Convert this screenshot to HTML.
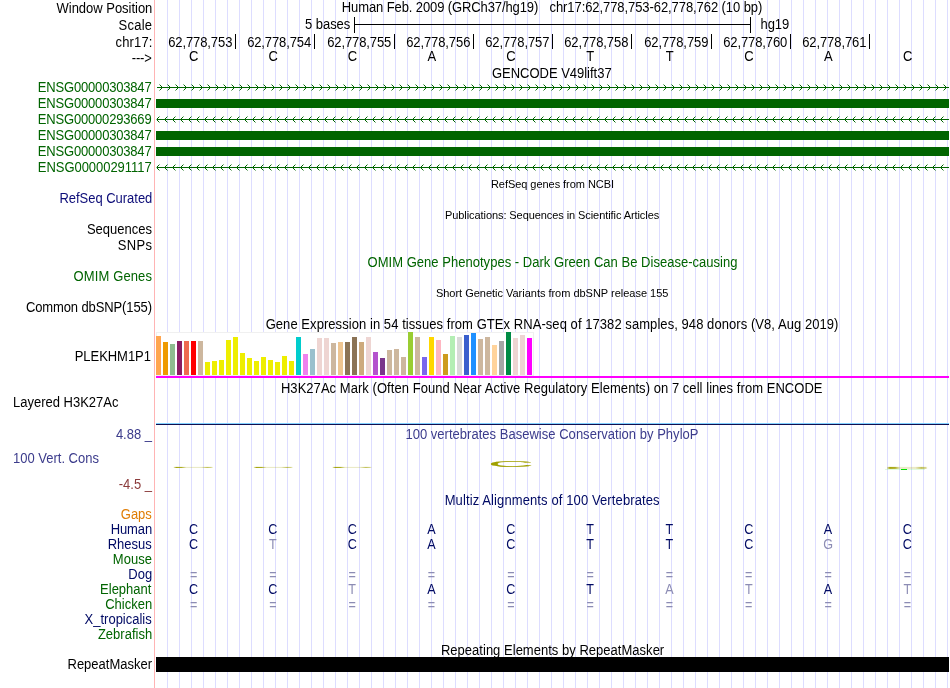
<!DOCTYPE html>
<html><head><meta charset="utf-8"><style>
html,body{margin:0;padding:0;background:#fff;overflow:hidden}
svg{display:block;will-change:transform}
text{font-family:"Liberation Sans",sans-serif}
</style></head><body>
<svg width="950" height="688" viewBox="0 0 950 688" shape-rendering="crispEdges">
<path d="M167.5 0V688 M179.5 0V688 M191.5 0V688 M203.5 0V688 M215.5 0V688 M227.5 0V688 M239.5 0V688 M251.5 0V688 M263.5 0V688 M275.5 0V688 M287.5 0V688 M299.5 0V688 M311.5 0V688 M323.5 0V688 M335.5 0V688 M347.5 0V688 M359.5 0V688 M371.5 0V688 M383.5 0V688 M395.5 0V688 M407.5 0V688 M419.5 0V688 M431.5 0V688 M443.5 0V688 M455.5 0V688 M467.5 0V688 M479.5 0V688 M491.5 0V688 M503.5 0V688 M515.5 0V688 M527.5 0V688 M539.5 0V688 M551.5 0V688 M563.5 0V688 M575.5 0V688 M587.5 0V688 M599.5 0V688 M611.5 0V688 M623.5 0V688 M635.5 0V688 M647.5 0V688 M659.5 0V688 M671.5 0V688 M683.5 0V688 M695.5 0V688 M707.5 0V688 M719.5 0V688 M731.5 0V688 M743.5 0V688 M755.5 0V688 M767.5 0V688 M779.5 0V688 M791.5 0V688 M803.5 0V688 M815.5 0V688 M827.5 0V688 M839.5 0V688 M851.5 0V688 M863.5 0V688 M875.5 0V688 M887.5 0V688 M899.5 0V688 M911.5 0V688 M923.5 0V688 M935.5 0V688 M947.5 0V688" stroke="#ddddff" stroke-width="1"/>
<path d="M154.5 0V688" stroke="#ffb4b4" stroke-width="1"/>
<text x="56.54" y="0" transform="translate(0 12.5) scale(1 1.07)" font-size="13" fill="#000" textLength="95.80" lengthAdjust="spacing" >Window Position</text>
<text x="118.61" y="0" transform="translate(0 29.5) scale(1 1.07)" font-size="13" fill="#000" textLength="33.47" lengthAdjust="spacing" >Scale</text>
<text x="115.55" y="0" transform="translate(0 47) scale(1 1.07)" font-size="13" fill="#000" textLength="36.84" lengthAdjust="spacing" >chr17:</text>
<text x="131.72" y="0" transform="translate(0 62.5) scale(1 1.07)" font-size="13" fill="#000" textLength="20.11" lengthAdjust="spacing" >---&gt;</text>
<text x="341.83" y="0" transform="translate(0 11.6) scale(1 1.07)" font-size="13" fill="#000" textLength="196.47" lengthAdjust="spacing" >Human Feb. 2009 (GRCh37/hg19)</text>
<text x="549.55" y="0" transform="translate(0 11.6) scale(1 1.07)" font-size="13" fill="#000" textLength="212.76" lengthAdjust="spacing" >chr17:62,778,753-62,778,762 (10 bp)</text>
<text x="305.08" y="0" transform="translate(0 29) scale(1 1.07)" font-size="13" fill="#000" textLength="45.19" lengthAdjust="spacing" >5 bases</text>
<path d="M354.5 17V33 M750.5 17V33 M354 24.5H751" stroke="#000" stroke-width="1"/>
<text x="760.60" y="0" transform="translate(0 29) scale(1 1.07)" font-size="13" fill="#000" textLength="28.52" lengthAdjust="spacing" >hg19</text>
<path d="M235.5 34V49" stroke="#000" stroke-width="1"/>
<text x="168.14" y="0" transform="translate(0 47) scale(1 1.07)" font-size="13" fill="#000" textLength="64.23" lengthAdjust="spacing" >62,778,753</text>
<path d="M314.5 34V49" stroke="#000" stroke-width="1"/>
<text x="247.14" y="0" transform="translate(0 47) scale(1 1.07)" font-size="13" fill="#000" textLength="64.04" lengthAdjust="spacing" >62,778,754</text>
<path d="M394.5 34V49" stroke="#000" stroke-width="1"/>
<text x="327.14" y="0" transform="translate(0 47) scale(1 1.07)" font-size="13" fill="#000" textLength="64.21" lengthAdjust="spacing" >62,778,755</text>
<path d="M473.5 34V49" stroke="#000" stroke-width="1"/>
<text x="406.14" y="0" transform="translate(0 47) scale(1 1.07)" font-size="13" fill="#000" textLength="64.23" lengthAdjust="spacing" >62,778,756</text>
<path d="M552.5 34V49" stroke="#000" stroke-width="1"/>
<text x="485.14" y="0" transform="translate(0 47) scale(1 1.07)" font-size="13" fill="#000" textLength="64.31" lengthAdjust="spacing" >62,778,757</text>
<path d="M631.5 34V49" stroke="#000" stroke-width="1"/>
<text x="564.14" y="0" transform="translate(0 47) scale(1 1.07)" font-size="13" fill="#000" textLength="64.23" lengthAdjust="spacing" >62,778,758</text>
<path d="M711.5 34V49" stroke="#000" stroke-width="1"/>
<text x="644.14" y="0" transform="translate(0 47) scale(1 1.07)" font-size="13" fill="#000" textLength="64.28" lengthAdjust="spacing" >62,778,759</text>
<path d="M790.5 34V49" stroke="#000" stroke-width="1"/>
<text x="723.14" y="0" transform="translate(0 47) scale(1 1.07)" font-size="13" fill="#000" textLength="64.17" lengthAdjust="spacing" >62,778,760</text>
<path d="M869.5 34V49" stroke="#000" stroke-width="1"/>
<text x="802.14" y="0" transform="translate(0 47) scale(1 1.07)" font-size="13" fill="#000" textLength="64.29" lengthAdjust="spacing" >62,778,761</text>
<text x="193.80" y="0" font-size="13" text-anchor="middle" transform="translate(0 60.8) scale(1 1.12)">C</text>
<text x="273.11" y="0" font-size="13" text-anchor="middle" transform="translate(0 60.8) scale(1 1.12)">C</text>
<text x="352.42" y="0" font-size="13" text-anchor="middle" transform="translate(0 60.8) scale(1 1.12)">C</text>
<text x="431.73" y="0" font-size="13" text-anchor="middle" transform="translate(0 60.8) scale(1 1.12)">A</text>
<text x="511.04" y="0" font-size="13" text-anchor="middle" transform="translate(0 60.8) scale(1 1.12)">C</text>
<text x="590.35" y="0" font-size="13" text-anchor="middle" transform="translate(0 60.8) scale(1 1.12)">T</text>
<text x="669.66" y="0" font-size="13" text-anchor="middle" transform="translate(0 60.8) scale(1 1.12)">T</text>
<text x="748.97" y="0" font-size="13" text-anchor="middle" transform="translate(0 60.8) scale(1 1.12)">C</text>
<text x="828.28" y="0" font-size="13" text-anchor="middle" transform="translate(0 60.8) scale(1 1.12)">A</text>
<text x="907.59" y="0" font-size="13" text-anchor="middle" transform="translate(0 60.8) scale(1 1.12)">C</text>
<text x="491.95" y="0" transform="translate(0 78) scale(1 1.07)" font-size="13" fill="#000" textLength="119.71" lengthAdjust="spacing" >GENCODE V49lift37</text>
<text x="37.83" y="0" transform="translate(0 91.8) scale(1 1.07)" font-size="13" fill="#006400" textLength="113.82" lengthAdjust="spacing" >ENSG00000303847</text>
<text x="37.83" y="0" transform="translate(0 107.8) scale(1 1.07)" font-size="13" fill="#006400" textLength="113.82" lengthAdjust="spacing" >ENSG00000303847</text>
<text x="37.83" y="0" transform="translate(0 123.8) scale(1 1.07)" font-size="13" fill="#006400" textLength="113.78" lengthAdjust="spacing" >ENSG00000293669</text>
<text x="37.83" y="0" transform="translate(0 139.8) scale(1 1.07)" font-size="13" fill="#006400" textLength="113.82" lengthAdjust="spacing" >ENSG00000303847</text>
<text x="37.83" y="0" transform="translate(0 155.8) scale(1 1.07)" font-size="13" fill="#006400" textLength="113.82" lengthAdjust="spacing" >ENSG00000303847</text>
<text x="37.83" y="0" transform="translate(0 171.8) scale(1 1.07)" font-size="13" fill="#006400" textLength="113.82" lengthAdjust="spacing" >ENSG00000291117</text>
<path d="M157 87h792v1h-792zM161 86h1v1h-1zM161 87h1v1h-1zM161 88h1v1h-1zM160 85h1v1h-1zM160 89h1v1h-1zM169 86h1v1h-1zM169 87h1v1h-1zM169 88h1v1h-1zM168 85h1v1h-1zM168 89h1v1h-1zM177 86h1v1h-1zM177 87h1v1h-1zM177 88h1v1h-1zM176 85h1v1h-1zM176 89h1v1h-1zM185 86h1v1h-1zM185 87h1v1h-1zM185 88h1v1h-1zM184 85h1v1h-1zM184 89h1v1h-1zM193 86h1v1h-1zM193 87h1v1h-1zM193 88h1v1h-1zM192 85h1v1h-1zM192 89h1v1h-1zM201 86h1v1h-1zM201 87h1v1h-1zM201 88h1v1h-1zM200 85h1v1h-1zM200 89h1v1h-1zM209 86h1v1h-1zM209 87h1v1h-1zM209 88h1v1h-1zM208 85h1v1h-1zM208 89h1v1h-1zM217 86h1v1h-1zM217 87h1v1h-1zM217 88h1v1h-1zM216 85h1v1h-1zM216 89h1v1h-1zM225 86h1v1h-1zM225 87h1v1h-1zM225 88h1v1h-1zM224 85h1v1h-1zM224 89h1v1h-1zM233 86h1v1h-1zM233 87h1v1h-1zM233 88h1v1h-1zM232 85h1v1h-1zM232 89h1v1h-1zM241 86h1v1h-1zM241 87h1v1h-1zM241 88h1v1h-1zM240 85h1v1h-1zM240 89h1v1h-1zM249 86h1v1h-1zM249 87h1v1h-1zM249 88h1v1h-1zM248 85h1v1h-1zM248 89h1v1h-1zM257 86h1v1h-1zM257 87h1v1h-1zM257 88h1v1h-1zM256 85h1v1h-1zM256 89h1v1h-1zM265 86h1v1h-1zM265 87h1v1h-1zM265 88h1v1h-1zM264 85h1v1h-1zM264 89h1v1h-1zM273 86h1v1h-1zM273 87h1v1h-1zM273 88h1v1h-1zM272 85h1v1h-1zM272 89h1v1h-1zM281 86h1v1h-1zM281 87h1v1h-1zM281 88h1v1h-1zM280 85h1v1h-1zM280 89h1v1h-1zM289 86h1v1h-1zM289 87h1v1h-1zM289 88h1v1h-1zM288 85h1v1h-1zM288 89h1v1h-1zM297 86h1v1h-1zM297 87h1v1h-1zM297 88h1v1h-1zM296 85h1v1h-1zM296 89h1v1h-1zM305 86h1v1h-1zM305 87h1v1h-1zM305 88h1v1h-1zM304 85h1v1h-1zM304 89h1v1h-1zM313 86h1v1h-1zM313 87h1v1h-1zM313 88h1v1h-1zM312 85h1v1h-1zM312 89h1v1h-1zM321 86h1v1h-1zM321 87h1v1h-1zM321 88h1v1h-1zM320 85h1v1h-1zM320 89h1v1h-1zM329 86h1v1h-1zM329 87h1v1h-1zM329 88h1v1h-1zM328 85h1v1h-1zM328 89h1v1h-1zM337 86h1v1h-1zM337 87h1v1h-1zM337 88h1v1h-1zM336 85h1v1h-1zM336 89h1v1h-1zM345 86h1v1h-1zM345 87h1v1h-1zM345 88h1v1h-1zM344 85h1v1h-1zM344 89h1v1h-1zM353 86h1v1h-1zM353 87h1v1h-1zM353 88h1v1h-1zM352 85h1v1h-1zM352 89h1v1h-1zM361 86h1v1h-1zM361 87h1v1h-1zM361 88h1v1h-1zM360 85h1v1h-1zM360 89h1v1h-1zM369 86h1v1h-1zM369 87h1v1h-1zM369 88h1v1h-1zM368 85h1v1h-1zM368 89h1v1h-1zM377 86h1v1h-1zM377 87h1v1h-1zM377 88h1v1h-1zM376 85h1v1h-1zM376 89h1v1h-1zM385 86h1v1h-1zM385 87h1v1h-1zM385 88h1v1h-1zM384 85h1v1h-1zM384 89h1v1h-1zM393 86h1v1h-1zM393 87h1v1h-1zM393 88h1v1h-1zM392 85h1v1h-1zM392 89h1v1h-1zM401 86h1v1h-1zM401 87h1v1h-1zM401 88h1v1h-1zM400 85h1v1h-1zM400 89h1v1h-1zM409 86h1v1h-1zM409 87h1v1h-1zM409 88h1v1h-1zM408 85h1v1h-1zM408 89h1v1h-1zM417 86h1v1h-1zM417 87h1v1h-1zM417 88h1v1h-1zM416 85h1v1h-1zM416 89h1v1h-1zM425 86h1v1h-1zM425 87h1v1h-1zM425 88h1v1h-1zM424 85h1v1h-1zM424 89h1v1h-1zM433 86h1v1h-1zM433 87h1v1h-1zM433 88h1v1h-1zM432 85h1v1h-1zM432 89h1v1h-1zM441 86h1v1h-1zM441 87h1v1h-1zM441 88h1v1h-1zM440 85h1v1h-1zM440 89h1v1h-1zM449 86h1v1h-1zM449 87h1v1h-1zM449 88h1v1h-1zM448 85h1v1h-1zM448 89h1v1h-1zM457 86h1v1h-1zM457 87h1v1h-1zM457 88h1v1h-1zM456 85h1v1h-1zM456 89h1v1h-1zM465 86h1v1h-1zM465 87h1v1h-1zM465 88h1v1h-1zM464 85h1v1h-1zM464 89h1v1h-1zM473 86h1v1h-1zM473 87h1v1h-1zM473 88h1v1h-1zM472 85h1v1h-1zM472 89h1v1h-1zM481 86h1v1h-1zM481 87h1v1h-1zM481 88h1v1h-1zM480 85h1v1h-1zM480 89h1v1h-1zM489 86h1v1h-1zM489 87h1v1h-1zM489 88h1v1h-1zM488 85h1v1h-1zM488 89h1v1h-1zM497 86h1v1h-1zM497 87h1v1h-1zM497 88h1v1h-1zM496 85h1v1h-1zM496 89h1v1h-1zM505 86h1v1h-1zM505 87h1v1h-1zM505 88h1v1h-1zM504 85h1v1h-1zM504 89h1v1h-1zM513 86h1v1h-1zM513 87h1v1h-1zM513 88h1v1h-1zM512 85h1v1h-1zM512 89h1v1h-1zM521 86h1v1h-1zM521 87h1v1h-1zM521 88h1v1h-1zM520 85h1v1h-1zM520 89h1v1h-1zM529 86h1v1h-1zM529 87h1v1h-1zM529 88h1v1h-1zM528 85h1v1h-1zM528 89h1v1h-1zM537 86h1v1h-1zM537 87h1v1h-1zM537 88h1v1h-1zM536 85h1v1h-1zM536 89h1v1h-1zM545 86h1v1h-1zM545 87h1v1h-1zM545 88h1v1h-1zM544 85h1v1h-1zM544 89h1v1h-1zM553 86h1v1h-1zM553 87h1v1h-1zM553 88h1v1h-1zM552 85h1v1h-1zM552 89h1v1h-1zM561 86h1v1h-1zM561 87h1v1h-1zM561 88h1v1h-1zM560 85h1v1h-1zM560 89h1v1h-1zM569 86h1v1h-1zM569 87h1v1h-1zM569 88h1v1h-1zM568 85h1v1h-1zM568 89h1v1h-1zM577 86h1v1h-1zM577 87h1v1h-1zM577 88h1v1h-1zM576 85h1v1h-1zM576 89h1v1h-1zM585 86h1v1h-1zM585 87h1v1h-1zM585 88h1v1h-1zM584 85h1v1h-1zM584 89h1v1h-1zM593 86h1v1h-1zM593 87h1v1h-1zM593 88h1v1h-1zM592 85h1v1h-1zM592 89h1v1h-1zM601 86h1v1h-1zM601 87h1v1h-1zM601 88h1v1h-1zM600 85h1v1h-1zM600 89h1v1h-1zM609 86h1v1h-1zM609 87h1v1h-1zM609 88h1v1h-1zM608 85h1v1h-1zM608 89h1v1h-1zM617 86h1v1h-1zM617 87h1v1h-1zM617 88h1v1h-1zM616 85h1v1h-1zM616 89h1v1h-1zM625 86h1v1h-1zM625 87h1v1h-1zM625 88h1v1h-1zM624 85h1v1h-1zM624 89h1v1h-1zM633 86h1v1h-1zM633 87h1v1h-1zM633 88h1v1h-1zM632 85h1v1h-1zM632 89h1v1h-1zM641 86h1v1h-1zM641 87h1v1h-1zM641 88h1v1h-1zM640 85h1v1h-1zM640 89h1v1h-1zM649 86h1v1h-1zM649 87h1v1h-1zM649 88h1v1h-1zM648 85h1v1h-1zM648 89h1v1h-1zM657 86h1v1h-1zM657 87h1v1h-1zM657 88h1v1h-1zM656 85h1v1h-1zM656 89h1v1h-1zM665 86h1v1h-1zM665 87h1v1h-1zM665 88h1v1h-1zM664 85h1v1h-1zM664 89h1v1h-1zM673 86h1v1h-1zM673 87h1v1h-1zM673 88h1v1h-1zM672 85h1v1h-1zM672 89h1v1h-1zM681 86h1v1h-1zM681 87h1v1h-1zM681 88h1v1h-1zM680 85h1v1h-1zM680 89h1v1h-1zM689 86h1v1h-1zM689 87h1v1h-1zM689 88h1v1h-1zM688 85h1v1h-1zM688 89h1v1h-1zM697 86h1v1h-1zM697 87h1v1h-1zM697 88h1v1h-1zM696 85h1v1h-1zM696 89h1v1h-1zM705 86h1v1h-1zM705 87h1v1h-1zM705 88h1v1h-1zM704 85h1v1h-1zM704 89h1v1h-1zM713 86h1v1h-1zM713 87h1v1h-1zM713 88h1v1h-1zM712 85h1v1h-1zM712 89h1v1h-1zM721 86h1v1h-1zM721 87h1v1h-1zM721 88h1v1h-1zM720 85h1v1h-1zM720 89h1v1h-1zM729 86h1v1h-1zM729 87h1v1h-1zM729 88h1v1h-1zM728 85h1v1h-1zM728 89h1v1h-1zM737 86h1v1h-1zM737 87h1v1h-1zM737 88h1v1h-1zM736 85h1v1h-1zM736 89h1v1h-1zM745 86h1v1h-1zM745 87h1v1h-1zM745 88h1v1h-1zM744 85h1v1h-1zM744 89h1v1h-1zM753 86h1v1h-1zM753 87h1v1h-1zM753 88h1v1h-1zM752 85h1v1h-1zM752 89h1v1h-1zM761 86h1v1h-1zM761 87h1v1h-1zM761 88h1v1h-1zM760 85h1v1h-1zM760 89h1v1h-1zM769 86h1v1h-1zM769 87h1v1h-1zM769 88h1v1h-1zM768 85h1v1h-1zM768 89h1v1h-1zM777 86h1v1h-1zM777 87h1v1h-1zM777 88h1v1h-1zM776 85h1v1h-1zM776 89h1v1h-1zM785 86h1v1h-1zM785 87h1v1h-1zM785 88h1v1h-1zM784 85h1v1h-1zM784 89h1v1h-1zM793 86h1v1h-1zM793 87h1v1h-1zM793 88h1v1h-1zM792 85h1v1h-1zM792 89h1v1h-1zM801 86h1v1h-1zM801 87h1v1h-1zM801 88h1v1h-1zM800 85h1v1h-1zM800 89h1v1h-1zM809 86h1v1h-1zM809 87h1v1h-1zM809 88h1v1h-1zM808 85h1v1h-1zM808 89h1v1h-1zM817 86h1v1h-1zM817 87h1v1h-1zM817 88h1v1h-1zM816 85h1v1h-1zM816 89h1v1h-1zM825 86h1v1h-1zM825 87h1v1h-1zM825 88h1v1h-1zM824 85h1v1h-1zM824 89h1v1h-1zM833 86h1v1h-1zM833 87h1v1h-1zM833 88h1v1h-1zM832 85h1v1h-1zM832 89h1v1h-1zM841 86h1v1h-1zM841 87h1v1h-1zM841 88h1v1h-1zM840 85h1v1h-1zM840 89h1v1h-1zM849 86h1v1h-1zM849 87h1v1h-1zM849 88h1v1h-1zM848 85h1v1h-1zM848 89h1v1h-1zM857 86h1v1h-1zM857 87h1v1h-1zM857 88h1v1h-1zM856 85h1v1h-1zM856 89h1v1h-1zM865 86h1v1h-1zM865 87h1v1h-1zM865 88h1v1h-1zM864 85h1v1h-1zM864 89h1v1h-1zM873 86h1v1h-1zM873 87h1v1h-1zM873 88h1v1h-1zM872 85h1v1h-1zM872 89h1v1h-1zM881 86h1v1h-1zM881 87h1v1h-1zM881 88h1v1h-1zM880 85h1v1h-1zM880 89h1v1h-1zM889 86h1v1h-1zM889 87h1v1h-1zM889 88h1v1h-1zM888 85h1v1h-1zM888 89h1v1h-1zM897 86h1v1h-1zM897 87h1v1h-1zM897 88h1v1h-1zM896 85h1v1h-1zM896 89h1v1h-1zM905 86h1v1h-1zM905 87h1v1h-1zM905 88h1v1h-1zM904 85h1v1h-1zM904 89h1v1h-1zM913 86h1v1h-1zM913 87h1v1h-1zM913 88h1v1h-1zM912 85h1v1h-1zM912 89h1v1h-1zM921 86h1v1h-1zM921 87h1v1h-1zM921 88h1v1h-1zM920 85h1v1h-1zM920 89h1v1h-1zM929 86h1v1h-1zM929 87h1v1h-1zM929 88h1v1h-1zM928 85h1v1h-1zM928 89h1v1h-1zM937 86h1v1h-1zM937 87h1v1h-1zM937 88h1v1h-1zM936 85h1v1h-1zM936 89h1v1h-1zM945 86h1v1h-1zM945 87h1v1h-1zM945 88h1v1h-1zM944 85h1v1h-1zM944 89h1v1h-1z" fill="#006400"/>
<path d="M159 84h1v1h-1zM159 90h1v1h-1zM162 87h1v1h-1zM167 84h1v1h-1zM167 90h1v1h-1zM170 87h1v1h-1zM175 84h1v1h-1zM175 90h1v1h-1zM178 87h1v1h-1zM183 84h1v1h-1zM183 90h1v1h-1zM186 87h1v1h-1zM191 84h1v1h-1zM191 90h1v1h-1zM194 87h1v1h-1zM199 84h1v1h-1zM199 90h1v1h-1zM202 87h1v1h-1zM207 84h1v1h-1zM207 90h1v1h-1zM210 87h1v1h-1zM215 84h1v1h-1zM215 90h1v1h-1zM218 87h1v1h-1zM223 84h1v1h-1zM223 90h1v1h-1zM226 87h1v1h-1zM231 84h1v1h-1zM231 90h1v1h-1zM234 87h1v1h-1zM239 84h1v1h-1zM239 90h1v1h-1zM242 87h1v1h-1zM247 84h1v1h-1zM247 90h1v1h-1zM250 87h1v1h-1zM255 84h1v1h-1zM255 90h1v1h-1zM258 87h1v1h-1zM263 84h1v1h-1zM263 90h1v1h-1zM266 87h1v1h-1zM271 84h1v1h-1zM271 90h1v1h-1zM274 87h1v1h-1zM279 84h1v1h-1zM279 90h1v1h-1zM282 87h1v1h-1zM287 84h1v1h-1zM287 90h1v1h-1zM290 87h1v1h-1zM295 84h1v1h-1zM295 90h1v1h-1zM298 87h1v1h-1zM303 84h1v1h-1zM303 90h1v1h-1zM306 87h1v1h-1zM311 84h1v1h-1zM311 90h1v1h-1zM314 87h1v1h-1zM319 84h1v1h-1zM319 90h1v1h-1zM322 87h1v1h-1zM327 84h1v1h-1zM327 90h1v1h-1zM330 87h1v1h-1zM335 84h1v1h-1zM335 90h1v1h-1zM338 87h1v1h-1zM343 84h1v1h-1zM343 90h1v1h-1zM346 87h1v1h-1zM351 84h1v1h-1zM351 90h1v1h-1zM354 87h1v1h-1zM359 84h1v1h-1zM359 90h1v1h-1zM362 87h1v1h-1zM367 84h1v1h-1zM367 90h1v1h-1zM370 87h1v1h-1zM375 84h1v1h-1zM375 90h1v1h-1zM378 87h1v1h-1zM383 84h1v1h-1zM383 90h1v1h-1zM386 87h1v1h-1zM391 84h1v1h-1zM391 90h1v1h-1zM394 87h1v1h-1zM399 84h1v1h-1zM399 90h1v1h-1zM402 87h1v1h-1zM407 84h1v1h-1zM407 90h1v1h-1zM410 87h1v1h-1zM415 84h1v1h-1zM415 90h1v1h-1zM418 87h1v1h-1zM423 84h1v1h-1zM423 90h1v1h-1zM426 87h1v1h-1zM431 84h1v1h-1zM431 90h1v1h-1zM434 87h1v1h-1zM439 84h1v1h-1zM439 90h1v1h-1zM442 87h1v1h-1zM447 84h1v1h-1zM447 90h1v1h-1zM450 87h1v1h-1zM455 84h1v1h-1zM455 90h1v1h-1zM458 87h1v1h-1zM463 84h1v1h-1zM463 90h1v1h-1zM466 87h1v1h-1zM471 84h1v1h-1zM471 90h1v1h-1zM474 87h1v1h-1zM479 84h1v1h-1zM479 90h1v1h-1zM482 87h1v1h-1zM487 84h1v1h-1zM487 90h1v1h-1zM490 87h1v1h-1zM495 84h1v1h-1zM495 90h1v1h-1zM498 87h1v1h-1zM503 84h1v1h-1zM503 90h1v1h-1zM506 87h1v1h-1zM511 84h1v1h-1zM511 90h1v1h-1zM514 87h1v1h-1zM519 84h1v1h-1zM519 90h1v1h-1zM522 87h1v1h-1zM527 84h1v1h-1zM527 90h1v1h-1zM530 87h1v1h-1zM535 84h1v1h-1zM535 90h1v1h-1zM538 87h1v1h-1zM543 84h1v1h-1zM543 90h1v1h-1zM546 87h1v1h-1zM551 84h1v1h-1zM551 90h1v1h-1zM554 87h1v1h-1zM559 84h1v1h-1zM559 90h1v1h-1zM562 87h1v1h-1zM567 84h1v1h-1zM567 90h1v1h-1zM570 87h1v1h-1zM575 84h1v1h-1zM575 90h1v1h-1zM578 87h1v1h-1zM583 84h1v1h-1zM583 90h1v1h-1zM586 87h1v1h-1zM591 84h1v1h-1zM591 90h1v1h-1zM594 87h1v1h-1zM599 84h1v1h-1zM599 90h1v1h-1zM602 87h1v1h-1zM607 84h1v1h-1zM607 90h1v1h-1zM610 87h1v1h-1zM615 84h1v1h-1zM615 90h1v1h-1zM618 87h1v1h-1zM623 84h1v1h-1zM623 90h1v1h-1zM626 87h1v1h-1zM631 84h1v1h-1zM631 90h1v1h-1zM634 87h1v1h-1zM639 84h1v1h-1zM639 90h1v1h-1zM642 87h1v1h-1zM647 84h1v1h-1zM647 90h1v1h-1zM650 87h1v1h-1zM655 84h1v1h-1zM655 90h1v1h-1zM658 87h1v1h-1zM663 84h1v1h-1zM663 90h1v1h-1zM666 87h1v1h-1zM671 84h1v1h-1zM671 90h1v1h-1zM674 87h1v1h-1zM679 84h1v1h-1zM679 90h1v1h-1zM682 87h1v1h-1zM687 84h1v1h-1zM687 90h1v1h-1zM690 87h1v1h-1zM695 84h1v1h-1zM695 90h1v1h-1zM698 87h1v1h-1zM703 84h1v1h-1zM703 90h1v1h-1zM706 87h1v1h-1zM711 84h1v1h-1zM711 90h1v1h-1zM714 87h1v1h-1zM719 84h1v1h-1zM719 90h1v1h-1zM722 87h1v1h-1zM727 84h1v1h-1zM727 90h1v1h-1zM730 87h1v1h-1zM735 84h1v1h-1zM735 90h1v1h-1zM738 87h1v1h-1zM743 84h1v1h-1zM743 90h1v1h-1zM746 87h1v1h-1zM751 84h1v1h-1zM751 90h1v1h-1zM754 87h1v1h-1zM759 84h1v1h-1zM759 90h1v1h-1zM762 87h1v1h-1zM767 84h1v1h-1zM767 90h1v1h-1zM770 87h1v1h-1zM775 84h1v1h-1zM775 90h1v1h-1zM778 87h1v1h-1zM783 84h1v1h-1zM783 90h1v1h-1zM786 87h1v1h-1zM791 84h1v1h-1zM791 90h1v1h-1zM794 87h1v1h-1zM799 84h1v1h-1zM799 90h1v1h-1zM802 87h1v1h-1zM807 84h1v1h-1zM807 90h1v1h-1zM810 87h1v1h-1zM815 84h1v1h-1zM815 90h1v1h-1zM818 87h1v1h-1zM823 84h1v1h-1zM823 90h1v1h-1zM826 87h1v1h-1zM831 84h1v1h-1zM831 90h1v1h-1zM834 87h1v1h-1zM839 84h1v1h-1zM839 90h1v1h-1zM842 87h1v1h-1zM847 84h1v1h-1zM847 90h1v1h-1zM850 87h1v1h-1zM855 84h1v1h-1zM855 90h1v1h-1zM858 87h1v1h-1zM863 84h1v1h-1zM863 90h1v1h-1zM866 87h1v1h-1zM871 84h1v1h-1zM871 90h1v1h-1zM874 87h1v1h-1zM879 84h1v1h-1zM879 90h1v1h-1zM882 87h1v1h-1zM887 84h1v1h-1zM887 90h1v1h-1zM890 87h1v1h-1zM895 84h1v1h-1zM895 90h1v1h-1zM898 87h1v1h-1zM903 84h1v1h-1zM903 90h1v1h-1zM906 87h1v1h-1zM911 84h1v1h-1zM911 90h1v1h-1zM914 87h1v1h-1zM919 84h1v1h-1zM919 90h1v1h-1zM922 87h1v1h-1zM927 84h1v1h-1zM927 90h1v1h-1zM930 87h1v1h-1zM935 84h1v1h-1zM935 90h1v1h-1zM938 87h1v1h-1zM943 84h1v1h-1zM943 90h1v1h-1zM946 87h1v1h-1z" fill="#006400" opacity="0.45"/>
<rect x="156" y="99" width="793" height="9" fill="#006400"/>
<path d="M157 119h792v1h-792zM157 118h1v1h-1zM157 119h1v1h-1zM157 120h1v1h-1zM158 117h1v1h-1zM158 121h1v1h-1zM165 118h1v1h-1zM165 119h1v1h-1zM165 120h1v1h-1zM166 117h1v1h-1zM166 121h1v1h-1zM173 118h1v1h-1zM173 119h1v1h-1zM173 120h1v1h-1zM174 117h1v1h-1zM174 121h1v1h-1zM181 118h1v1h-1zM181 119h1v1h-1zM181 120h1v1h-1zM182 117h1v1h-1zM182 121h1v1h-1zM189 118h1v1h-1zM189 119h1v1h-1zM189 120h1v1h-1zM190 117h1v1h-1zM190 121h1v1h-1zM197 118h1v1h-1zM197 119h1v1h-1zM197 120h1v1h-1zM198 117h1v1h-1zM198 121h1v1h-1zM205 118h1v1h-1zM205 119h1v1h-1zM205 120h1v1h-1zM206 117h1v1h-1zM206 121h1v1h-1zM213 118h1v1h-1zM213 119h1v1h-1zM213 120h1v1h-1zM214 117h1v1h-1zM214 121h1v1h-1zM221 118h1v1h-1zM221 119h1v1h-1zM221 120h1v1h-1zM222 117h1v1h-1zM222 121h1v1h-1zM229 118h1v1h-1zM229 119h1v1h-1zM229 120h1v1h-1zM230 117h1v1h-1zM230 121h1v1h-1zM237 118h1v1h-1zM237 119h1v1h-1zM237 120h1v1h-1zM238 117h1v1h-1zM238 121h1v1h-1zM245 118h1v1h-1zM245 119h1v1h-1zM245 120h1v1h-1zM246 117h1v1h-1zM246 121h1v1h-1zM253 118h1v1h-1zM253 119h1v1h-1zM253 120h1v1h-1zM254 117h1v1h-1zM254 121h1v1h-1zM261 118h1v1h-1zM261 119h1v1h-1zM261 120h1v1h-1zM262 117h1v1h-1zM262 121h1v1h-1zM269 118h1v1h-1zM269 119h1v1h-1zM269 120h1v1h-1zM270 117h1v1h-1zM270 121h1v1h-1zM277 118h1v1h-1zM277 119h1v1h-1zM277 120h1v1h-1zM278 117h1v1h-1zM278 121h1v1h-1zM285 118h1v1h-1zM285 119h1v1h-1zM285 120h1v1h-1zM286 117h1v1h-1zM286 121h1v1h-1zM293 118h1v1h-1zM293 119h1v1h-1zM293 120h1v1h-1zM294 117h1v1h-1zM294 121h1v1h-1zM301 118h1v1h-1zM301 119h1v1h-1zM301 120h1v1h-1zM302 117h1v1h-1zM302 121h1v1h-1zM309 118h1v1h-1zM309 119h1v1h-1zM309 120h1v1h-1zM310 117h1v1h-1zM310 121h1v1h-1zM317 118h1v1h-1zM317 119h1v1h-1zM317 120h1v1h-1zM318 117h1v1h-1zM318 121h1v1h-1zM325 118h1v1h-1zM325 119h1v1h-1zM325 120h1v1h-1zM326 117h1v1h-1zM326 121h1v1h-1zM333 118h1v1h-1zM333 119h1v1h-1zM333 120h1v1h-1zM334 117h1v1h-1zM334 121h1v1h-1zM341 118h1v1h-1zM341 119h1v1h-1zM341 120h1v1h-1zM342 117h1v1h-1zM342 121h1v1h-1zM349 118h1v1h-1zM349 119h1v1h-1zM349 120h1v1h-1zM350 117h1v1h-1zM350 121h1v1h-1zM357 118h1v1h-1zM357 119h1v1h-1zM357 120h1v1h-1zM358 117h1v1h-1zM358 121h1v1h-1zM365 118h1v1h-1zM365 119h1v1h-1zM365 120h1v1h-1zM366 117h1v1h-1zM366 121h1v1h-1zM373 118h1v1h-1zM373 119h1v1h-1zM373 120h1v1h-1zM374 117h1v1h-1zM374 121h1v1h-1zM381 118h1v1h-1zM381 119h1v1h-1zM381 120h1v1h-1zM382 117h1v1h-1zM382 121h1v1h-1zM389 118h1v1h-1zM389 119h1v1h-1zM389 120h1v1h-1zM390 117h1v1h-1zM390 121h1v1h-1zM397 118h1v1h-1zM397 119h1v1h-1zM397 120h1v1h-1zM398 117h1v1h-1zM398 121h1v1h-1zM405 118h1v1h-1zM405 119h1v1h-1zM405 120h1v1h-1zM406 117h1v1h-1zM406 121h1v1h-1zM413 118h1v1h-1zM413 119h1v1h-1zM413 120h1v1h-1zM414 117h1v1h-1zM414 121h1v1h-1zM421 118h1v1h-1zM421 119h1v1h-1zM421 120h1v1h-1zM422 117h1v1h-1zM422 121h1v1h-1zM429 118h1v1h-1zM429 119h1v1h-1zM429 120h1v1h-1zM430 117h1v1h-1zM430 121h1v1h-1zM437 118h1v1h-1zM437 119h1v1h-1zM437 120h1v1h-1zM438 117h1v1h-1zM438 121h1v1h-1zM445 118h1v1h-1zM445 119h1v1h-1zM445 120h1v1h-1zM446 117h1v1h-1zM446 121h1v1h-1zM453 118h1v1h-1zM453 119h1v1h-1zM453 120h1v1h-1zM454 117h1v1h-1zM454 121h1v1h-1zM461 118h1v1h-1zM461 119h1v1h-1zM461 120h1v1h-1zM462 117h1v1h-1zM462 121h1v1h-1zM469 118h1v1h-1zM469 119h1v1h-1zM469 120h1v1h-1zM470 117h1v1h-1zM470 121h1v1h-1zM477 118h1v1h-1zM477 119h1v1h-1zM477 120h1v1h-1zM478 117h1v1h-1zM478 121h1v1h-1zM485 118h1v1h-1zM485 119h1v1h-1zM485 120h1v1h-1zM486 117h1v1h-1zM486 121h1v1h-1zM493 118h1v1h-1zM493 119h1v1h-1zM493 120h1v1h-1zM494 117h1v1h-1zM494 121h1v1h-1zM501 118h1v1h-1zM501 119h1v1h-1zM501 120h1v1h-1zM502 117h1v1h-1zM502 121h1v1h-1zM509 118h1v1h-1zM509 119h1v1h-1zM509 120h1v1h-1zM510 117h1v1h-1zM510 121h1v1h-1zM517 118h1v1h-1zM517 119h1v1h-1zM517 120h1v1h-1zM518 117h1v1h-1zM518 121h1v1h-1zM525 118h1v1h-1zM525 119h1v1h-1zM525 120h1v1h-1zM526 117h1v1h-1zM526 121h1v1h-1zM533 118h1v1h-1zM533 119h1v1h-1zM533 120h1v1h-1zM534 117h1v1h-1zM534 121h1v1h-1zM541 118h1v1h-1zM541 119h1v1h-1zM541 120h1v1h-1zM542 117h1v1h-1zM542 121h1v1h-1zM549 118h1v1h-1zM549 119h1v1h-1zM549 120h1v1h-1zM550 117h1v1h-1zM550 121h1v1h-1zM557 118h1v1h-1zM557 119h1v1h-1zM557 120h1v1h-1zM558 117h1v1h-1zM558 121h1v1h-1zM565 118h1v1h-1zM565 119h1v1h-1zM565 120h1v1h-1zM566 117h1v1h-1zM566 121h1v1h-1zM573 118h1v1h-1zM573 119h1v1h-1zM573 120h1v1h-1zM574 117h1v1h-1zM574 121h1v1h-1zM581 118h1v1h-1zM581 119h1v1h-1zM581 120h1v1h-1zM582 117h1v1h-1zM582 121h1v1h-1zM589 118h1v1h-1zM589 119h1v1h-1zM589 120h1v1h-1zM590 117h1v1h-1zM590 121h1v1h-1zM597 118h1v1h-1zM597 119h1v1h-1zM597 120h1v1h-1zM598 117h1v1h-1zM598 121h1v1h-1zM605 118h1v1h-1zM605 119h1v1h-1zM605 120h1v1h-1zM606 117h1v1h-1zM606 121h1v1h-1zM613 118h1v1h-1zM613 119h1v1h-1zM613 120h1v1h-1zM614 117h1v1h-1zM614 121h1v1h-1zM621 118h1v1h-1zM621 119h1v1h-1zM621 120h1v1h-1zM622 117h1v1h-1zM622 121h1v1h-1zM629 118h1v1h-1zM629 119h1v1h-1zM629 120h1v1h-1zM630 117h1v1h-1zM630 121h1v1h-1zM637 118h1v1h-1zM637 119h1v1h-1zM637 120h1v1h-1zM638 117h1v1h-1zM638 121h1v1h-1zM645 118h1v1h-1zM645 119h1v1h-1zM645 120h1v1h-1zM646 117h1v1h-1zM646 121h1v1h-1zM653 118h1v1h-1zM653 119h1v1h-1zM653 120h1v1h-1zM654 117h1v1h-1zM654 121h1v1h-1zM661 118h1v1h-1zM661 119h1v1h-1zM661 120h1v1h-1zM662 117h1v1h-1zM662 121h1v1h-1zM669 118h1v1h-1zM669 119h1v1h-1zM669 120h1v1h-1zM670 117h1v1h-1zM670 121h1v1h-1zM677 118h1v1h-1zM677 119h1v1h-1zM677 120h1v1h-1zM678 117h1v1h-1zM678 121h1v1h-1zM685 118h1v1h-1zM685 119h1v1h-1zM685 120h1v1h-1zM686 117h1v1h-1zM686 121h1v1h-1zM693 118h1v1h-1zM693 119h1v1h-1zM693 120h1v1h-1zM694 117h1v1h-1zM694 121h1v1h-1zM701 118h1v1h-1zM701 119h1v1h-1zM701 120h1v1h-1zM702 117h1v1h-1zM702 121h1v1h-1zM709 118h1v1h-1zM709 119h1v1h-1zM709 120h1v1h-1zM710 117h1v1h-1zM710 121h1v1h-1zM717 118h1v1h-1zM717 119h1v1h-1zM717 120h1v1h-1zM718 117h1v1h-1zM718 121h1v1h-1zM725 118h1v1h-1zM725 119h1v1h-1zM725 120h1v1h-1zM726 117h1v1h-1zM726 121h1v1h-1zM733 118h1v1h-1zM733 119h1v1h-1zM733 120h1v1h-1zM734 117h1v1h-1zM734 121h1v1h-1zM741 118h1v1h-1zM741 119h1v1h-1zM741 120h1v1h-1zM742 117h1v1h-1zM742 121h1v1h-1zM749 118h1v1h-1zM749 119h1v1h-1zM749 120h1v1h-1zM750 117h1v1h-1zM750 121h1v1h-1zM757 118h1v1h-1zM757 119h1v1h-1zM757 120h1v1h-1zM758 117h1v1h-1zM758 121h1v1h-1zM765 118h1v1h-1zM765 119h1v1h-1zM765 120h1v1h-1zM766 117h1v1h-1zM766 121h1v1h-1zM773 118h1v1h-1zM773 119h1v1h-1zM773 120h1v1h-1zM774 117h1v1h-1zM774 121h1v1h-1zM781 118h1v1h-1zM781 119h1v1h-1zM781 120h1v1h-1zM782 117h1v1h-1zM782 121h1v1h-1zM789 118h1v1h-1zM789 119h1v1h-1zM789 120h1v1h-1zM790 117h1v1h-1zM790 121h1v1h-1zM797 118h1v1h-1zM797 119h1v1h-1zM797 120h1v1h-1zM798 117h1v1h-1zM798 121h1v1h-1zM805 118h1v1h-1zM805 119h1v1h-1zM805 120h1v1h-1zM806 117h1v1h-1zM806 121h1v1h-1zM813 118h1v1h-1zM813 119h1v1h-1zM813 120h1v1h-1zM814 117h1v1h-1zM814 121h1v1h-1zM821 118h1v1h-1zM821 119h1v1h-1zM821 120h1v1h-1zM822 117h1v1h-1zM822 121h1v1h-1zM829 118h1v1h-1zM829 119h1v1h-1zM829 120h1v1h-1zM830 117h1v1h-1zM830 121h1v1h-1zM837 118h1v1h-1zM837 119h1v1h-1zM837 120h1v1h-1zM838 117h1v1h-1zM838 121h1v1h-1zM845 118h1v1h-1zM845 119h1v1h-1zM845 120h1v1h-1zM846 117h1v1h-1zM846 121h1v1h-1zM853 118h1v1h-1zM853 119h1v1h-1zM853 120h1v1h-1zM854 117h1v1h-1zM854 121h1v1h-1zM861 118h1v1h-1zM861 119h1v1h-1zM861 120h1v1h-1zM862 117h1v1h-1zM862 121h1v1h-1zM869 118h1v1h-1zM869 119h1v1h-1zM869 120h1v1h-1zM870 117h1v1h-1zM870 121h1v1h-1zM877 118h1v1h-1zM877 119h1v1h-1zM877 120h1v1h-1zM878 117h1v1h-1zM878 121h1v1h-1zM885 118h1v1h-1zM885 119h1v1h-1zM885 120h1v1h-1zM886 117h1v1h-1zM886 121h1v1h-1zM893 118h1v1h-1zM893 119h1v1h-1zM893 120h1v1h-1zM894 117h1v1h-1zM894 121h1v1h-1zM901 118h1v1h-1zM901 119h1v1h-1zM901 120h1v1h-1zM902 117h1v1h-1zM902 121h1v1h-1zM909 118h1v1h-1zM909 119h1v1h-1zM909 120h1v1h-1zM910 117h1v1h-1zM910 121h1v1h-1zM917 118h1v1h-1zM917 119h1v1h-1zM917 120h1v1h-1zM918 117h1v1h-1zM918 121h1v1h-1zM925 118h1v1h-1zM925 119h1v1h-1zM925 120h1v1h-1zM926 117h1v1h-1zM926 121h1v1h-1zM933 118h1v1h-1zM933 119h1v1h-1zM933 120h1v1h-1zM934 117h1v1h-1zM934 121h1v1h-1zM941 118h1v1h-1zM941 119h1v1h-1zM941 120h1v1h-1zM942 117h1v1h-1zM942 121h1v1h-1z" fill="#006400"/>
<path d="M159 116h1v1h-1zM159 122h1v1h-1zM156 119h1v1h-1zM167 116h1v1h-1zM167 122h1v1h-1zM164 119h1v1h-1zM175 116h1v1h-1zM175 122h1v1h-1zM172 119h1v1h-1zM183 116h1v1h-1zM183 122h1v1h-1zM180 119h1v1h-1zM191 116h1v1h-1zM191 122h1v1h-1zM188 119h1v1h-1zM199 116h1v1h-1zM199 122h1v1h-1zM196 119h1v1h-1zM207 116h1v1h-1zM207 122h1v1h-1zM204 119h1v1h-1zM215 116h1v1h-1zM215 122h1v1h-1zM212 119h1v1h-1zM223 116h1v1h-1zM223 122h1v1h-1zM220 119h1v1h-1zM231 116h1v1h-1zM231 122h1v1h-1zM228 119h1v1h-1zM239 116h1v1h-1zM239 122h1v1h-1zM236 119h1v1h-1zM247 116h1v1h-1zM247 122h1v1h-1zM244 119h1v1h-1zM255 116h1v1h-1zM255 122h1v1h-1zM252 119h1v1h-1zM263 116h1v1h-1zM263 122h1v1h-1zM260 119h1v1h-1zM271 116h1v1h-1zM271 122h1v1h-1zM268 119h1v1h-1zM279 116h1v1h-1zM279 122h1v1h-1zM276 119h1v1h-1zM287 116h1v1h-1zM287 122h1v1h-1zM284 119h1v1h-1zM295 116h1v1h-1zM295 122h1v1h-1zM292 119h1v1h-1zM303 116h1v1h-1zM303 122h1v1h-1zM300 119h1v1h-1zM311 116h1v1h-1zM311 122h1v1h-1zM308 119h1v1h-1zM319 116h1v1h-1zM319 122h1v1h-1zM316 119h1v1h-1zM327 116h1v1h-1zM327 122h1v1h-1zM324 119h1v1h-1zM335 116h1v1h-1zM335 122h1v1h-1zM332 119h1v1h-1zM343 116h1v1h-1zM343 122h1v1h-1zM340 119h1v1h-1zM351 116h1v1h-1zM351 122h1v1h-1zM348 119h1v1h-1zM359 116h1v1h-1zM359 122h1v1h-1zM356 119h1v1h-1zM367 116h1v1h-1zM367 122h1v1h-1zM364 119h1v1h-1zM375 116h1v1h-1zM375 122h1v1h-1zM372 119h1v1h-1zM383 116h1v1h-1zM383 122h1v1h-1zM380 119h1v1h-1zM391 116h1v1h-1zM391 122h1v1h-1zM388 119h1v1h-1zM399 116h1v1h-1zM399 122h1v1h-1zM396 119h1v1h-1zM407 116h1v1h-1zM407 122h1v1h-1zM404 119h1v1h-1zM415 116h1v1h-1zM415 122h1v1h-1zM412 119h1v1h-1zM423 116h1v1h-1zM423 122h1v1h-1zM420 119h1v1h-1zM431 116h1v1h-1zM431 122h1v1h-1zM428 119h1v1h-1zM439 116h1v1h-1zM439 122h1v1h-1zM436 119h1v1h-1zM447 116h1v1h-1zM447 122h1v1h-1zM444 119h1v1h-1zM455 116h1v1h-1zM455 122h1v1h-1zM452 119h1v1h-1zM463 116h1v1h-1zM463 122h1v1h-1zM460 119h1v1h-1zM471 116h1v1h-1zM471 122h1v1h-1zM468 119h1v1h-1zM479 116h1v1h-1zM479 122h1v1h-1zM476 119h1v1h-1zM487 116h1v1h-1zM487 122h1v1h-1zM484 119h1v1h-1zM495 116h1v1h-1zM495 122h1v1h-1zM492 119h1v1h-1zM503 116h1v1h-1zM503 122h1v1h-1zM500 119h1v1h-1zM511 116h1v1h-1zM511 122h1v1h-1zM508 119h1v1h-1zM519 116h1v1h-1zM519 122h1v1h-1zM516 119h1v1h-1zM527 116h1v1h-1zM527 122h1v1h-1zM524 119h1v1h-1zM535 116h1v1h-1zM535 122h1v1h-1zM532 119h1v1h-1zM543 116h1v1h-1zM543 122h1v1h-1zM540 119h1v1h-1zM551 116h1v1h-1zM551 122h1v1h-1zM548 119h1v1h-1zM559 116h1v1h-1zM559 122h1v1h-1zM556 119h1v1h-1zM567 116h1v1h-1zM567 122h1v1h-1zM564 119h1v1h-1zM575 116h1v1h-1zM575 122h1v1h-1zM572 119h1v1h-1zM583 116h1v1h-1zM583 122h1v1h-1zM580 119h1v1h-1zM591 116h1v1h-1zM591 122h1v1h-1zM588 119h1v1h-1zM599 116h1v1h-1zM599 122h1v1h-1zM596 119h1v1h-1zM607 116h1v1h-1zM607 122h1v1h-1zM604 119h1v1h-1zM615 116h1v1h-1zM615 122h1v1h-1zM612 119h1v1h-1zM623 116h1v1h-1zM623 122h1v1h-1zM620 119h1v1h-1zM631 116h1v1h-1zM631 122h1v1h-1zM628 119h1v1h-1zM639 116h1v1h-1zM639 122h1v1h-1zM636 119h1v1h-1zM647 116h1v1h-1zM647 122h1v1h-1zM644 119h1v1h-1zM655 116h1v1h-1zM655 122h1v1h-1zM652 119h1v1h-1zM663 116h1v1h-1zM663 122h1v1h-1zM660 119h1v1h-1zM671 116h1v1h-1zM671 122h1v1h-1zM668 119h1v1h-1zM679 116h1v1h-1zM679 122h1v1h-1zM676 119h1v1h-1zM687 116h1v1h-1zM687 122h1v1h-1zM684 119h1v1h-1zM695 116h1v1h-1zM695 122h1v1h-1zM692 119h1v1h-1zM703 116h1v1h-1zM703 122h1v1h-1zM700 119h1v1h-1zM711 116h1v1h-1zM711 122h1v1h-1zM708 119h1v1h-1zM719 116h1v1h-1zM719 122h1v1h-1zM716 119h1v1h-1zM727 116h1v1h-1zM727 122h1v1h-1zM724 119h1v1h-1zM735 116h1v1h-1zM735 122h1v1h-1zM732 119h1v1h-1zM743 116h1v1h-1zM743 122h1v1h-1zM740 119h1v1h-1zM751 116h1v1h-1zM751 122h1v1h-1zM748 119h1v1h-1zM759 116h1v1h-1zM759 122h1v1h-1zM756 119h1v1h-1zM767 116h1v1h-1zM767 122h1v1h-1zM764 119h1v1h-1zM775 116h1v1h-1zM775 122h1v1h-1zM772 119h1v1h-1zM783 116h1v1h-1zM783 122h1v1h-1zM780 119h1v1h-1zM791 116h1v1h-1zM791 122h1v1h-1zM788 119h1v1h-1zM799 116h1v1h-1zM799 122h1v1h-1zM796 119h1v1h-1zM807 116h1v1h-1zM807 122h1v1h-1zM804 119h1v1h-1zM815 116h1v1h-1zM815 122h1v1h-1zM812 119h1v1h-1zM823 116h1v1h-1zM823 122h1v1h-1zM820 119h1v1h-1zM831 116h1v1h-1zM831 122h1v1h-1zM828 119h1v1h-1zM839 116h1v1h-1zM839 122h1v1h-1zM836 119h1v1h-1zM847 116h1v1h-1zM847 122h1v1h-1zM844 119h1v1h-1zM855 116h1v1h-1zM855 122h1v1h-1zM852 119h1v1h-1zM863 116h1v1h-1zM863 122h1v1h-1zM860 119h1v1h-1zM871 116h1v1h-1zM871 122h1v1h-1zM868 119h1v1h-1zM879 116h1v1h-1zM879 122h1v1h-1zM876 119h1v1h-1zM887 116h1v1h-1zM887 122h1v1h-1zM884 119h1v1h-1zM895 116h1v1h-1zM895 122h1v1h-1zM892 119h1v1h-1zM903 116h1v1h-1zM903 122h1v1h-1zM900 119h1v1h-1zM911 116h1v1h-1zM911 122h1v1h-1zM908 119h1v1h-1zM919 116h1v1h-1zM919 122h1v1h-1zM916 119h1v1h-1zM927 116h1v1h-1zM927 122h1v1h-1zM924 119h1v1h-1zM935 116h1v1h-1zM935 122h1v1h-1zM932 119h1v1h-1zM943 116h1v1h-1zM943 122h1v1h-1zM940 119h1v1h-1z" fill="#006400" opacity="0.45"/>
<rect x="156" y="131" width="793" height="9" fill="#006400"/>
<rect x="156" y="147" width="793" height="9" fill="#006400"/>
<path d="M157 167h792v1h-792zM157 166h1v1h-1zM157 167h1v1h-1zM157 168h1v1h-1zM158 165h1v1h-1zM158 169h1v1h-1zM165 166h1v1h-1zM165 167h1v1h-1zM165 168h1v1h-1zM166 165h1v1h-1zM166 169h1v1h-1zM173 166h1v1h-1zM173 167h1v1h-1zM173 168h1v1h-1zM174 165h1v1h-1zM174 169h1v1h-1zM181 166h1v1h-1zM181 167h1v1h-1zM181 168h1v1h-1zM182 165h1v1h-1zM182 169h1v1h-1zM189 166h1v1h-1zM189 167h1v1h-1zM189 168h1v1h-1zM190 165h1v1h-1zM190 169h1v1h-1zM197 166h1v1h-1zM197 167h1v1h-1zM197 168h1v1h-1zM198 165h1v1h-1zM198 169h1v1h-1zM205 166h1v1h-1zM205 167h1v1h-1zM205 168h1v1h-1zM206 165h1v1h-1zM206 169h1v1h-1zM213 166h1v1h-1zM213 167h1v1h-1zM213 168h1v1h-1zM214 165h1v1h-1zM214 169h1v1h-1zM221 166h1v1h-1zM221 167h1v1h-1zM221 168h1v1h-1zM222 165h1v1h-1zM222 169h1v1h-1zM229 166h1v1h-1zM229 167h1v1h-1zM229 168h1v1h-1zM230 165h1v1h-1zM230 169h1v1h-1zM237 166h1v1h-1zM237 167h1v1h-1zM237 168h1v1h-1zM238 165h1v1h-1zM238 169h1v1h-1zM245 166h1v1h-1zM245 167h1v1h-1zM245 168h1v1h-1zM246 165h1v1h-1zM246 169h1v1h-1zM253 166h1v1h-1zM253 167h1v1h-1zM253 168h1v1h-1zM254 165h1v1h-1zM254 169h1v1h-1zM261 166h1v1h-1zM261 167h1v1h-1zM261 168h1v1h-1zM262 165h1v1h-1zM262 169h1v1h-1zM269 166h1v1h-1zM269 167h1v1h-1zM269 168h1v1h-1zM270 165h1v1h-1zM270 169h1v1h-1zM277 166h1v1h-1zM277 167h1v1h-1zM277 168h1v1h-1zM278 165h1v1h-1zM278 169h1v1h-1zM285 166h1v1h-1zM285 167h1v1h-1zM285 168h1v1h-1zM286 165h1v1h-1zM286 169h1v1h-1zM293 166h1v1h-1zM293 167h1v1h-1zM293 168h1v1h-1zM294 165h1v1h-1zM294 169h1v1h-1zM301 166h1v1h-1zM301 167h1v1h-1zM301 168h1v1h-1zM302 165h1v1h-1zM302 169h1v1h-1zM309 166h1v1h-1zM309 167h1v1h-1zM309 168h1v1h-1zM310 165h1v1h-1zM310 169h1v1h-1zM317 166h1v1h-1zM317 167h1v1h-1zM317 168h1v1h-1zM318 165h1v1h-1zM318 169h1v1h-1zM325 166h1v1h-1zM325 167h1v1h-1zM325 168h1v1h-1zM326 165h1v1h-1zM326 169h1v1h-1zM333 166h1v1h-1zM333 167h1v1h-1zM333 168h1v1h-1zM334 165h1v1h-1zM334 169h1v1h-1zM341 166h1v1h-1zM341 167h1v1h-1zM341 168h1v1h-1zM342 165h1v1h-1zM342 169h1v1h-1zM349 166h1v1h-1zM349 167h1v1h-1zM349 168h1v1h-1zM350 165h1v1h-1zM350 169h1v1h-1zM357 166h1v1h-1zM357 167h1v1h-1zM357 168h1v1h-1zM358 165h1v1h-1zM358 169h1v1h-1zM365 166h1v1h-1zM365 167h1v1h-1zM365 168h1v1h-1zM366 165h1v1h-1zM366 169h1v1h-1zM373 166h1v1h-1zM373 167h1v1h-1zM373 168h1v1h-1zM374 165h1v1h-1zM374 169h1v1h-1zM381 166h1v1h-1zM381 167h1v1h-1zM381 168h1v1h-1zM382 165h1v1h-1zM382 169h1v1h-1zM389 166h1v1h-1zM389 167h1v1h-1zM389 168h1v1h-1zM390 165h1v1h-1zM390 169h1v1h-1zM397 166h1v1h-1zM397 167h1v1h-1zM397 168h1v1h-1zM398 165h1v1h-1zM398 169h1v1h-1zM405 166h1v1h-1zM405 167h1v1h-1zM405 168h1v1h-1zM406 165h1v1h-1zM406 169h1v1h-1zM413 166h1v1h-1zM413 167h1v1h-1zM413 168h1v1h-1zM414 165h1v1h-1zM414 169h1v1h-1zM421 166h1v1h-1zM421 167h1v1h-1zM421 168h1v1h-1zM422 165h1v1h-1zM422 169h1v1h-1zM429 166h1v1h-1zM429 167h1v1h-1zM429 168h1v1h-1zM430 165h1v1h-1zM430 169h1v1h-1zM437 166h1v1h-1zM437 167h1v1h-1zM437 168h1v1h-1zM438 165h1v1h-1zM438 169h1v1h-1zM445 166h1v1h-1zM445 167h1v1h-1zM445 168h1v1h-1zM446 165h1v1h-1zM446 169h1v1h-1zM453 166h1v1h-1zM453 167h1v1h-1zM453 168h1v1h-1zM454 165h1v1h-1zM454 169h1v1h-1zM461 166h1v1h-1zM461 167h1v1h-1zM461 168h1v1h-1zM462 165h1v1h-1zM462 169h1v1h-1zM469 166h1v1h-1zM469 167h1v1h-1zM469 168h1v1h-1zM470 165h1v1h-1zM470 169h1v1h-1zM477 166h1v1h-1zM477 167h1v1h-1zM477 168h1v1h-1zM478 165h1v1h-1zM478 169h1v1h-1zM485 166h1v1h-1zM485 167h1v1h-1zM485 168h1v1h-1zM486 165h1v1h-1zM486 169h1v1h-1zM493 166h1v1h-1zM493 167h1v1h-1zM493 168h1v1h-1zM494 165h1v1h-1zM494 169h1v1h-1zM501 166h1v1h-1zM501 167h1v1h-1zM501 168h1v1h-1zM502 165h1v1h-1zM502 169h1v1h-1zM509 166h1v1h-1zM509 167h1v1h-1zM509 168h1v1h-1zM510 165h1v1h-1zM510 169h1v1h-1zM517 166h1v1h-1zM517 167h1v1h-1zM517 168h1v1h-1zM518 165h1v1h-1zM518 169h1v1h-1zM525 166h1v1h-1zM525 167h1v1h-1zM525 168h1v1h-1zM526 165h1v1h-1zM526 169h1v1h-1zM533 166h1v1h-1zM533 167h1v1h-1zM533 168h1v1h-1zM534 165h1v1h-1zM534 169h1v1h-1zM541 166h1v1h-1zM541 167h1v1h-1zM541 168h1v1h-1zM542 165h1v1h-1zM542 169h1v1h-1zM549 166h1v1h-1zM549 167h1v1h-1zM549 168h1v1h-1zM550 165h1v1h-1zM550 169h1v1h-1zM557 166h1v1h-1zM557 167h1v1h-1zM557 168h1v1h-1zM558 165h1v1h-1zM558 169h1v1h-1zM565 166h1v1h-1zM565 167h1v1h-1zM565 168h1v1h-1zM566 165h1v1h-1zM566 169h1v1h-1zM573 166h1v1h-1zM573 167h1v1h-1zM573 168h1v1h-1zM574 165h1v1h-1zM574 169h1v1h-1zM581 166h1v1h-1zM581 167h1v1h-1zM581 168h1v1h-1zM582 165h1v1h-1zM582 169h1v1h-1zM589 166h1v1h-1zM589 167h1v1h-1zM589 168h1v1h-1zM590 165h1v1h-1zM590 169h1v1h-1zM597 166h1v1h-1zM597 167h1v1h-1zM597 168h1v1h-1zM598 165h1v1h-1zM598 169h1v1h-1zM605 166h1v1h-1zM605 167h1v1h-1zM605 168h1v1h-1zM606 165h1v1h-1zM606 169h1v1h-1zM613 166h1v1h-1zM613 167h1v1h-1zM613 168h1v1h-1zM614 165h1v1h-1zM614 169h1v1h-1zM621 166h1v1h-1zM621 167h1v1h-1zM621 168h1v1h-1zM622 165h1v1h-1zM622 169h1v1h-1zM629 166h1v1h-1zM629 167h1v1h-1zM629 168h1v1h-1zM630 165h1v1h-1zM630 169h1v1h-1zM637 166h1v1h-1zM637 167h1v1h-1zM637 168h1v1h-1zM638 165h1v1h-1zM638 169h1v1h-1zM645 166h1v1h-1zM645 167h1v1h-1zM645 168h1v1h-1zM646 165h1v1h-1zM646 169h1v1h-1zM653 166h1v1h-1zM653 167h1v1h-1zM653 168h1v1h-1zM654 165h1v1h-1zM654 169h1v1h-1zM661 166h1v1h-1zM661 167h1v1h-1zM661 168h1v1h-1zM662 165h1v1h-1zM662 169h1v1h-1zM669 166h1v1h-1zM669 167h1v1h-1zM669 168h1v1h-1zM670 165h1v1h-1zM670 169h1v1h-1zM677 166h1v1h-1zM677 167h1v1h-1zM677 168h1v1h-1zM678 165h1v1h-1zM678 169h1v1h-1zM685 166h1v1h-1zM685 167h1v1h-1zM685 168h1v1h-1zM686 165h1v1h-1zM686 169h1v1h-1zM693 166h1v1h-1zM693 167h1v1h-1zM693 168h1v1h-1zM694 165h1v1h-1zM694 169h1v1h-1zM701 166h1v1h-1zM701 167h1v1h-1zM701 168h1v1h-1zM702 165h1v1h-1zM702 169h1v1h-1zM709 166h1v1h-1zM709 167h1v1h-1zM709 168h1v1h-1zM710 165h1v1h-1zM710 169h1v1h-1zM717 166h1v1h-1zM717 167h1v1h-1zM717 168h1v1h-1zM718 165h1v1h-1zM718 169h1v1h-1zM725 166h1v1h-1zM725 167h1v1h-1zM725 168h1v1h-1zM726 165h1v1h-1zM726 169h1v1h-1zM733 166h1v1h-1zM733 167h1v1h-1zM733 168h1v1h-1zM734 165h1v1h-1zM734 169h1v1h-1zM741 166h1v1h-1zM741 167h1v1h-1zM741 168h1v1h-1zM742 165h1v1h-1zM742 169h1v1h-1zM749 166h1v1h-1zM749 167h1v1h-1zM749 168h1v1h-1zM750 165h1v1h-1zM750 169h1v1h-1zM757 166h1v1h-1zM757 167h1v1h-1zM757 168h1v1h-1zM758 165h1v1h-1zM758 169h1v1h-1zM765 166h1v1h-1zM765 167h1v1h-1zM765 168h1v1h-1zM766 165h1v1h-1zM766 169h1v1h-1zM773 166h1v1h-1zM773 167h1v1h-1zM773 168h1v1h-1zM774 165h1v1h-1zM774 169h1v1h-1zM781 166h1v1h-1zM781 167h1v1h-1zM781 168h1v1h-1zM782 165h1v1h-1zM782 169h1v1h-1zM789 166h1v1h-1zM789 167h1v1h-1zM789 168h1v1h-1zM790 165h1v1h-1zM790 169h1v1h-1zM797 166h1v1h-1zM797 167h1v1h-1zM797 168h1v1h-1zM798 165h1v1h-1zM798 169h1v1h-1zM805 166h1v1h-1zM805 167h1v1h-1zM805 168h1v1h-1zM806 165h1v1h-1zM806 169h1v1h-1zM813 166h1v1h-1zM813 167h1v1h-1zM813 168h1v1h-1zM814 165h1v1h-1zM814 169h1v1h-1zM821 166h1v1h-1zM821 167h1v1h-1zM821 168h1v1h-1zM822 165h1v1h-1zM822 169h1v1h-1zM829 166h1v1h-1zM829 167h1v1h-1zM829 168h1v1h-1zM830 165h1v1h-1zM830 169h1v1h-1zM837 166h1v1h-1zM837 167h1v1h-1zM837 168h1v1h-1zM838 165h1v1h-1zM838 169h1v1h-1zM845 166h1v1h-1zM845 167h1v1h-1zM845 168h1v1h-1zM846 165h1v1h-1zM846 169h1v1h-1zM853 166h1v1h-1zM853 167h1v1h-1zM853 168h1v1h-1zM854 165h1v1h-1zM854 169h1v1h-1zM861 166h1v1h-1zM861 167h1v1h-1zM861 168h1v1h-1zM862 165h1v1h-1zM862 169h1v1h-1zM869 166h1v1h-1zM869 167h1v1h-1zM869 168h1v1h-1zM870 165h1v1h-1zM870 169h1v1h-1zM877 166h1v1h-1zM877 167h1v1h-1zM877 168h1v1h-1zM878 165h1v1h-1zM878 169h1v1h-1zM885 166h1v1h-1zM885 167h1v1h-1zM885 168h1v1h-1zM886 165h1v1h-1zM886 169h1v1h-1zM893 166h1v1h-1zM893 167h1v1h-1zM893 168h1v1h-1zM894 165h1v1h-1zM894 169h1v1h-1zM901 166h1v1h-1zM901 167h1v1h-1zM901 168h1v1h-1zM902 165h1v1h-1zM902 169h1v1h-1zM909 166h1v1h-1zM909 167h1v1h-1zM909 168h1v1h-1zM910 165h1v1h-1zM910 169h1v1h-1zM917 166h1v1h-1zM917 167h1v1h-1zM917 168h1v1h-1zM918 165h1v1h-1zM918 169h1v1h-1zM925 166h1v1h-1zM925 167h1v1h-1zM925 168h1v1h-1zM926 165h1v1h-1zM926 169h1v1h-1zM933 166h1v1h-1zM933 167h1v1h-1zM933 168h1v1h-1zM934 165h1v1h-1zM934 169h1v1h-1zM941 166h1v1h-1zM941 167h1v1h-1zM941 168h1v1h-1zM942 165h1v1h-1zM942 169h1v1h-1z" fill="#006400"/>
<path d="M159 164h1v1h-1zM159 170h1v1h-1zM156 167h1v1h-1zM167 164h1v1h-1zM167 170h1v1h-1zM164 167h1v1h-1zM175 164h1v1h-1zM175 170h1v1h-1zM172 167h1v1h-1zM183 164h1v1h-1zM183 170h1v1h-1zM180 167h1v1h-1zM191 164h1v1h-1zM191 170h1v1h-1zM188 167h1v1h-1zM199 164h1v1h-1zM199 170h1v1h-1zM196 167h1v1h-1zM207 164h1v1h-1zM207 170h1v1h-1zM204 167h1v1h-1zM215 164h1v1h-1zM215 170h1v1h-1zM212 167h1v1h-1zM223 164h1v1h-1zM223 170h1v1h-1zM220 167h1v1h-1zM231 164h1v1h-1zM231 170h1v1h-1zM228 167h1v1h-1zM239 164h1v1h-1zM239 170h1v1h-1zM236 167h1v1h-1zM247 164h1v1h-1zM247 170h1v1h-1zM244 167h1v1h-1zM255 164h1v1h-1zM255 170h1v1h-1zM252 167h1v1h-1zM263 164h1v1h-1zM263 170h1v1h-1zM260 167h1v1h-1zM271 164h1v1h-1zM271 170h1v1h-1zM268 167h1v1h-1zM279 164h1v1h-1zM279 170h1v1h-1zM276 167h1v1h-1zM287 164h1v1h-1zM287 170h1v1h-1zM284 167h1v1h-1zM295 164h1v1h-1zM295 170h1v1h-1zM292 167h1v1h-1zM303 164h1v1h-1zM303 170h1v1h-1zM300 167h1v1h-1zM311 164h1v1h-1zM311 170h1v1h-1zM308 167h1v1h-1zM319 164h1v1h-1zM319 170h1v1h-1zM316 167h1v1h-1zM327 164h1v1h-1zM327 170h1v1h-1zM324 167h1v1h-1zM335 164h1v1h-1zM335 170h1v1h-1zM332 167h1v1h-1zM343 164h1v1h-1zM343 170h1v1h-1zM340 167h1v1h-1zM351 164h1v1h-1zM351 170h1v1h-1zM348 167h1v1h-1zM359 164h1v1h-1zM359 170h1v1h-1zM356 167h1v1h-1zM367 164h1v1h-1zM367 170h1v1h-1zM364 167h1v1h-1zM375 164h1v1h-1zM375 170h1v1h-1zM372 167h1v1h-1zM383 164h1v1h-1zM383 170h1v1h-1zM380 167h1v1h-1zM391 164h1v1h-1zM391 170h1v1h-1zM388 167h1v1h-1zM399 164h1v1h-1zM399 170h1v1h-1zM396 167h1v1h-1zM407 164h1v1h-1zM407 170h1v1h-1zM404 167h1v1h-1zM415 164h1v1h-1zM415 170h1v1h-1zM412 167h1v1h-1zM423 164h1v1h-1zM423 170h1v1h-1zM420 167h1v1h-1zM431 164h1v1h-1zM431 170h1v1h-1zM428 167h1v1h-1zM439 164h1v1h-1zM439 170h1v1h-1zM436 167h1v1h-1zM447 164h1v1h-1zM447 170h1v1h-1zM444 167h1v1h-1zM455 164h1v1h-1zM455 170h1v1h-1zM452 167h1v1h-1zM463 164h1v1h-1zM463 170h1v1h-1zM460 167h1v1h-1zM471 164h1v1h-1zM471 170h1v1h-1zM468 167h1v1h-1zM479 164h1v1h-1zM479 170h1v1h-1zM476 167h1v1h-1zM487 164h1v1h-1zM487 170h1v1h-1zM484 167h1v1h-1zM495 164h1v1h-1zM495 170h1v1h-1zM492 167h1v1h-1zM503 164h1v1h-1zM503 170h1v1h-1zM500 167h1v1h-1zM511 164h1v1h-1zM511 170h1v1h-1zM508 167h1v1h-1zM519 164h1v1h-1zM519 170h1v1h-1zM516 167h1v1h-1zM527 164h1v1h-1zM527 170h1v1h-1zM524 167h1v1h-1zM535 164h1v1h-1zM535 170h1v1h-1zM532 167h1v1h-1zM543 164h1v1h-1zM543 170h1v1h-1zM540 167h1v1h-1zM551 164h1v1h-1zM551 170h1v1h-1zM548 167h1v1h-1zM559 164h1v1h-1zM559 170h1v1h-1zM556 167h1v1h-1zM567 164h1v1h-1zM567 170h1v1h-1zM564 167h1v1h-1zM575 164h1v1h-1zM575 170h1v1h-1zM572 167h1v1h-1zM583 164h1v1h-1zM583 170h1v1h-1zM580 167h1v1h-1zM591 164h1v1h-1zM591 170h1v1h-1zM588 167h1v1h-1zM599 164h1v1h-1zM599 170h1v1h-1zM596 167h1v1h-1zM607 164h1v1h-1zM607 170h1v1h-1zM604 167h1v1h-1zM615 164h1v1h-1zM615 170h1v1h-1zM612 167h1v1h-1zM623 164h1v1h-1zM623 170h1v1h-1zM620 167h1v1h-1zM631 164h1v1h-1zM631 170h1v1h-1zM628 167h1v1h-1zM639 164h1v1h-1zM639 170h1v1h-1zM636 167h1v1h-1zM647 164h1v1h-1zM647 170h1v1h-1zM644 167h1v1h-1zM655 164h1v1h-1zM655 170h1v1h-1zM652 167h1v1h-1zM663 164h1v1h-1zM663 170h1v1h-1zM660 167h1v1h-1zM671 164h1v1h-1zM671 170h1v1h-1zM668 167h1v1h-1zM679 164h1v1h-1zM679 170h1v1h-1zM676 167h1v1h-1zM687 164h1v1h-1zM687 170h1v1h-1zM684 167h1v1h-1zM695 164h1v1h-1zM695 170h1v1h-1zM692 167h1v1h-1zM703 164h1v1h-1zM703 170h1v1h-1zM700 167h1v1h-1zM711 164h1v1h-1zM711 170h1v1h-1zM708 167h1v1h-1zM719 164h1v1h-1zM719 170h1v1h-1zM716 167h1v1h-1zM727 164h1v1h-1zM727 170h1v1h-1zM724 167h1v1h-1zM735 164h1v1h-1zM735 170h1v1h-1zM732 167h1v1h-1zM743 164h1v1h-1zM743 170h1v1h-1zM740 167h1v1h-1zM751 164h1v1h-1zM751 170h1v1h-1zM748 167h1v1h-1zM759 164h1v1h-1zM759 170h1v1h-1zM756 167h1v1h-1zM767 164h1v1h-1zM767 170h1v1h-1zM764 167h1v1h-1zM775 164h1v1h-1zM775 170h1v1h-1zM772 167h1v1h-1zM783 164h1v1h-1zM783 170h1v1h-1zM780 167h1v1h-1zM791 164h1v1h-1zM791 170h1v1h-1zM788 167h1v1h-1zM799 164h1v1h-1zM799 170h1v1h-1zM796 167h1v1h-1zM807 164h1v1h-1zM807 170h1v1h-1zM804 167h1v1h-1zM815 164h1v1h-1zM815 170h1v1h-1zM812 167h1v1h-1zM823 164h1v1h-1zM823 170h1v1h-1zM820 167h1v1h-1zM831 164h1v1h-1zM831 170h1v1h-1zM828 167h1v1h-1zM839 164h1v1h-1zM839 170h1v1h-1zM836 167h1v1h-1zM847 164h1v1h-1zM847 170h1v1h-1zM844 167h1v1h-1zM855 164h1v1h-1zM855 170h1v1h-1zM852 167h1v1h-1zM863 164h1v1h-1zM863 170h1v1h-1zM860 167h1v1h-1zM871 164h1v1h-1zM871 170h1v1h-1zM868 167h1v1h-1zM879 164h1v1h-1zM879 170h1v1h-1zM876 167h1v1h-1zM887 164h1v1h-1zM887 170h1v1h-1zM884 167h1v1h-1zM895 164h1v1h-1zM895 170h1v1h-1zM892 167h1v1h-1zM903 164h1v1h-1zM903 170h1v1h-1zM900 167h1v1h-1zM911 164h1v1h-1zM911 170h1v1h-1zM908 167h1v1h-1zM919 164h1v1h-1zM919 170h1v1h-1zM916 167h1v1h-1zM927 164h1v1h-1zM927 170h1v1h-1zM924 167h1v1h-1zM935 164h1v1h-1zM935 170h1v1h-1zM932 167h1v1h-1zM943 164h1v1h-1zM943 170h1v1h-1zM940 167h1v1h-1z" fill="#006400" opacity="0.45"/>
<text x="490.90" y="188" font-size="11" fill="#000" textLength="123.22" lengthAdjust="spacing" >RefSeq genes from NCBI</text>
<text x="59.43" y="0" transform="translate(0 202.6) scale(1 1.07)" font-size="13" fill="#0c0c78" textLength="92.90" lengthAdjust="spacing" >RefSeq Curated</text>
<text x="445.00" y="219" font-size="11" fill="#000" textLength="214.20" lengthAdjust="spacing" >Publications: Sequences in Scientific Articles</text>
<text x="86.91" y="0" transform="translate(0 233.7) scale(1 1.07)" font-size="13" fill="#000" textLength="65.06" lengthAdjust="spacing" >Sequences</text>
<text x="117.81" y="0" transform="translate(0 249.7) scale(1 1.07)" font-size="13" fill="#000" textLength="34.16" lengthAdjust="spacing" >SNPs</text>
<text x="367.58" y="0" transform="translate(0 267) scale(1 1.07)" font-size="13" fill="#006400" textLength="369.95" lengthAdjust="spacing" >OMIM Gene Phenotypes - Dark Green Can Be Disease-causing</text>
<text x="73.58" y="0" transform="translate(0 280.7) scale(1 1.07)" font-size="13" fill="#006400" textLength="78.39" lengthAdjust="spacing" >OMIM Genes</text>
<text x="435.90" y="297" font-size="11" fill="#000" textLength="232.46" lengthAdjust="spacing" >Short Genetic Variants from dbSNP release 155</text>
<text x="25.94" y="0" transform="translate(0 311.7) scale(1 1.07)" font-size="13" fill="#000" textLength="126.07" lengthAdjust="spacing" >Common dbSNP(155)</text>
<text x="265.65" y="0" transform="translate(0 329) scale(1 1.07)" font-size="13" fill="#000" textLength="572.76" lengthAdjust="spacing" >Gene Expression in 54 tissues from GTEx RNA-seq of 17382 samples, 948 donors (V8, Aug 2019)</text>
<text x="74.73" y="0" transform="translate(0 361) scale(1 1.07)" font-size="13" fill="#000" textLength="76.20" lengthAdjust="spacing" >PLEKHM1P1</text>
<rect x="156.5" y="332.5" width="377" height="43" fill="#fff" stroke="#f0f0f0" stroke-width="1"/>
<rect x="156" y="336" width="5" height="39" fill="#FFA54F"/>
<rect x="163" y="342" width="5" height="33" fill="#EE9A00"/>
<rect x="170" y="344" width="5" height="31" fill="#8FBC8F"/>
<rect x="177" y="341" width="5" height="34" fill="#8B1C62"/>
<rect x="184" y="341" width="5" height="34" fill="#EE6A50"/>
<rect x="191" y="341" width="5" height="34" fill="#FF0000"/>
<rect x="198" y="341" width="5" height="34" fill="#CDB79E"/>
<rect x="205" y="362" width="5" height="13" fill="#EEEE00"/>
<rect x="212" y="361" width="5" height="14" fill="#EEEE00"/>
<rect x="219" y="360" width="5" height="15" fill="#EEEE00"/>
<rect x="226" y="340" width="5" height="35" fill="#EEEE00"/>
<rect x="233" y="337" width="5" height="38" fill="#EEEE00"/>
<rect x="240" y="353" width="5" height="22" fill="#EEEE00"/>
<rect x="247" y="358" width="5" height="17" fill="#EEEE00"/>
<rect x="254" y="361" width="5" height="14" fill="#EEEE00"/>
<rect x="261" y="357" width="5" height="18" fill="#EEEE00"/>
<rect x="268" y="360" width="5" height="15" fill="#EEEE00"/>
<rect x="275" y="362" width="5" height="13" fill="#EEEE00"/>
<rect x="282" y="356" width="5" height="19" fill="#EEEE00"/>
<rect x="289" y="361" width="5" height="14" fill="#EEEE00"/>
<rect x="296" y="337" width="5" height="38" fill="#00CDCD"/>
<rect x="303" y="354" width="5" height="21" fill="#EE82EE"/>
<rect x="310" y="349" width="5" height="26" fill="#9AC0CD"/>
<rect x="317" y="338" width="5" height="37" fill="#EED5D2"/>
<rect x="324" y="338" width="5" height="37" fill="#EED5D2"/>
<rect x="331" y="343" width="5" height="32" fill="#CDB79E"/>
<rect x="338" y="342" width="5" height="33" fill="#EEC591"/>
<rect x="345" y="342" width="5" height="33" fill="#8B7355"/>
<rect x="352" y="337" width="5" height="38" fill="#8B7355"/>
<rect x="359" y="342" width="5" height="33" fill="#CDAA7D"/>
<rect x="366" y="337" width="5" height="38" fill="#EED5D2"/>
<rect x="373" y="352" width="5" height="23" fill="#B452CD"/>
<rect x="380" y="358" width="5" height="17" fill="#7A378B"/>
<rect x="387" y="350" width="5" height="25" fill="#CDB79E"/>
<rect x="394" y="349" width="5" height="26" fill="#CDB79E"/>
<rect x="401" y="357" width="5" height="18" fill="#CDB79E"/>
<rect x="408" y="332" width="5" height="43" fill="#9ACD32"/>
<rect x="415" y="337" width="5" height="38" fill="#CDB79E"/>
<rect x="422" y="357" width="5" height="18" fill="#7A67EE"/>
<rect x="429" y="337" width="5" height="38" fill="#FFD700"/>
<rect x="436" y="340" width="5" height="35" fill="#FFB6C1"/>
<rect x="443" y="354" width="5" height="21" fill="#CD9B1D"/>
<rect x="450" y="336" width="5" height="39" fill="#B4EEB4"/>
<rect x="457" y="337" width="5" height="38" fill="#D9D9D9"/>
<rect x="464" y="335" width="5" height="40" fill="#3A5FCD"/>
<rect x="471" y="333" width="5" height="42" fill="#1E90FF"/>
<rect x="478" y="339" width="5" height="36" fill="#CDB79E"/>
<rect x="485" y="337" width="5" height="38" fill="#CDB79E"/>
<rect x="492" y="345" width="5" height="30" fill="#FFD39B"/>
<rect x="499" y="341" width="5" height="34" fill="#A6A6A6"/>
<rect x="506" y="332" width="5" height="43" fill="#008B45"/>
<rect x="513" y="338" width="5" height="37" fill="#EED5D2"/>
<rect x="520" y="335" width="5" height="40" fill="#EED5D2"/>
<rect x="527" y="338" width="5" height="37" fill="#FF00FF"/>
<rect x="156" y="376" width="793" height="2" fill="#ff00ff"/>
<text x="280.93" y="0" transform="translate(0 393) scale(1 1.07)" font-size="13" fill="#000" textLength="541.62" lengthAdjust="spacing" >H3K27Ac Mark (Often Found Near Active Regulatory Elements) on 7 cell lines from ENCODE</text>
<text x="13.00" y="0" transform="translate(0 407) scale(1 1.07)" font-size="13" fill="#000" text-anchor="start" >Layered H3K27Ac</text>
<rect x="156" y="423" width="793" height="1" fill="#80d0ff"/>
<rect x="156" y="424" width="793" height="1" fill="#101050"/>
<text x="405.41" y="0" transform="translate(0 439) scale(1 1.07)" font-size="13" fill="#3c3c8c" textLength="293.08" lengthAdjust="spacing" >100 vertebrates Basewise Conservation by PhyloP</text>
<text x="152.00" y="0" transform="translate(0 439) scale(1 1.07)" font-size="13" fill="#3c3c8c" text-anchor="end" >4.88 _</text>
<text x="13.00" y="0" transform="translate(0 463) scale(1 1.07)" font-size="13" fill="#3c3c8c" text-anchor="start" >100 Vert. Cons</text>
<text x="152.00" y="0" transform="translate(0 489) scale(1 1.07)" font-size="13" fill="#8c3c3c" text-anchor="end" >-4.5 _</text>
<text x="0" y="0" font-size="100" fill="#a0a000" opacity="1" stroke="#a0a000" stroke-width="0.6" vector-effect="non-scaling-stroke" transform="matrix(0.63477 0 0 0.09039 488.077 466.912)">C</text>
<defs><linearGradient id="cg" x1="0" x2="1" y1="0" y2="0"><stop offset="0" stop-color="#a0a000" stop-opacity="0.2"/><stop offset="0.07" stop-color="#a0a000" stop-opacity="0.95"/><stop offset="0.2" stop-color="#a0a000" stop-opacity="0.85"/><stop offset="0.32" stop-color="#a0a000" stop-opacity="0.22"/><stop offset="0.7" stop-color="#a0a000" stop-opacity="0.22"/><stop offset="0.85" stop-color="#a0a000" stop-opacity="0.65"/><stop offset="0.95" stop-color="#a0a000" stop-opacity="0.45"/><stop offset="1" stop-color="#a0a000" stop-opacity="0.05"/></linearGradient></defs>
<rect x="173.6" y="466.9" width="39.50" height="1.1" fill="url(#cg)" shape-rendering="geometricPrecision"/>
<rect x="253.8" y="466.9" width="39.10" height="1.1" fill="url(#cg)" shape-rendering="geometricPrecision"/>
<rect x="332.5" y="466.9" width="39.30" height="1.1" fill="url(#cg)" shape-rendering="geometricPrecision"/>
<rect x="887.0" y="466.9" width="40.50" height="2.0" fill="url(#cg)" shape-rendering="geometricPrecision"/>
<rect x="885" y="469" width="40" height="1" fill="#00e000" opacity="0.12"/>
<rect x="901" y="469" width="6" height="1" fill="#00e000"/>
<text x="444.63" y="0" transform="translate(0 505) scale(1 1.07)" font-size="13" fill="#000a64" textLength="214.94" lengthAdjust="spacing" >Multiz Alignments of 100 Vertebrates</text>
<text x="120.85" y="0" transform="translate(0 519) scale(1 1.07)" font-size="13" fill="#e07d05" textLength="30.92" lengthAdjust="spacing" >Gaps</text>
<text x="110.63" y="0" transform="translate(0 534) scale(1 1.07)" font-size="13" fill="#000a64" textLength="41.51" lengthAdjust="spacing" >Human</text>
<text x="107.69" y="0" transform="translate(0 549) scale(1 1.07)" font-size="13" fill="#000a64" textLength="44.08" lengthAdjust="spacing" >Rhesus</text>
<text x="112.86" y="0" transform="translate(0 564) scale(1 1.07)" font-size="13" fill="#006400" textLength="39.02" lengthAdjust="spacing" >Mouse</text>
<text x="128.29" y="0" transform="translate(0 579) scale(1 1.07)" font-size="13" fill="#000a64" textLength="23.85" lengthAdjust="spacing" >Dog</text>
<text x="100.07" y="0" transform="translate(0 594) scale(1 1.07)" font-size="13" fill="#006400" textLength="51.32" lengthAdjust="spacing" >Elephant</text>
<text x="105.18" y="0" transform="translate(0 609) scale(1 1.07)" font-size="13" fill="#006400" textLength="46.97" lengthAdjust="spacing" >Chicken</text>
<text x="84.57" y="0" transform="translate(0 624) scale(1 1.07)" font-size="13" fill="#000a64" textLength="67.20" lengthAdjust="spacing" >X_tropicalis</text>
<text x="97.95" y="0" transform="translate(0 639) scale(1 1.07)" font-size="13" fill="#006400" textLength="54.19" lengthAdjust="spacing" >Zebrafish</text>
<text x="193.60" y="0" transform="translate(0 534.1) scale(1 1.1)" font-size="12.6" fill="#000a64" text-anchor="middle" >C</text>
<text x="272.91" y="0" transform="translate(0 534.1) scale(1 1.1)" font-size="12.6" fill="#000a64" text-anchor="middle" >C</text>
<text x="352.22" y="0" transform="translate(0 534.1) scale(1 1.1)" font-size="12.6" fill="#000a64" text-anchor="middle" >C</text>
<text x="431.53" y="0" transform="translate(0 534.1) scale(1 1.1)" font-size="12.6" fill="#000a64" text-anchor="middle" >A</text>
<text x="510.84" y="0" transform="translate(0 534.1) scale(1 1.1)" font-size="12.6" fill="#000a64" text-anchor="middle" >C</text>
<text x="590.15" y="0" transform="translate(0 534.1) scale(1 1.1)" font-size="12.6" fill="#000a64" text-anchor="middle" >T</text>
<text x="669.46" y="0" transform="translate(0 534.1) scale(1 1.1)" font-size="12.6" fill="#000a64" text-anchor="middle" >T</text>
<text x="748.77" y="0" transform="translate(0 534.1) scale(1 1.1)" font-size="12.6" fill="#000a64" text-anchor="middle" >C</text>
<text x="828.08" y="0" transform="translate(0 534.1) scale(1 1.1)" font-size="12.6" fill="#000a64" text-anchor="middle" >A</text>
<text x="907.39" y="0" transform="translate(0 534.1) scale(1 1.1)" font-size="12.6" fill="#000a64" text-anchor="middle" >C</text>
<text x="193.60" y="0" transform="translate(0 549.1) scale(1 1.1)" font-size="12.6" fill="#000a64" text-anchor="middle" >C</text>
<text x="272.91" y="0" transform="translate(0 549.1) scale(1 1.1)" font-size="12.6" fill="#8c8cb4" text-anchor="middle" >T</text>
<text x="352.22" y="0" transform="translate(0 549.1) scale(1 1.1)" font-size="12.6" fill="#000a64" text-anchor="middle" >C</text>
<text x="431.53" y="0" transform="translate(0 549.1) scale(1 1.1)" font-size="12.6" fill="#000a64" text-anchor="middle" >A</text>
<text x="510.84" y="0" transform="translate(0 549.1) scale(1 1.1)" font-size="12.6" fill="#000a64" text-anchor="middle" >C</text>
<text x="590.15" y="0" transform="translate(0 549.1) scale(1 1.1)" font-size="12.6" fill="#000a64" text-anchor="middle" >T</text>
<text x="669.46" y="0" transform="translate(0 549.1) scale(1 1.1)" font-size="12.6" fill="#000a64" text-anchor="middle" >T</text>
<text x="748.77" y="0" transform="translate(0 549.1) scale(1 1.1)" font-size="12.6" fill="#000a64" text-anchor="middle" >C</text>
<text x="828.08" y="0" transform="translate(0 549.1) scale(1 1.1)" font-size="12.6" fill="#8c8cb4" text-anchor="middle" >G</text>
<text x="907.39" y="0" transform="translate(0 549.1) scale(1 1.1)" font-size="12.6" fill="#000a64" text-anchor="middle" >C</text>
<text x="193.60" y="0" transform="translate(0 580.1) scale(1 1.1)" font-size="12.6" fill="#8c8cb4" text-anchor="middle" >=</text>
<text x="272.91" y="0" transform="translate(0 580.1) scale(1 1.1)" font-size="12.6" fill="#8c8cb4" text-anchor="middle" >=</text>
<text x="352.22" y="0" transform="translate(0 580.1) scale(1 1.1)" font-size="12.6" fill="#8c8cb4" text-anchor="middle" >=</text>
<text x="431.53" y="0" transform="translate(0 580.1) scale(1 1.1)" font-size="12.6" fill="#8c8cb4" text-anchor="middle" >=</text>
<text x="510.84" y="0" transform="translate(0 580.1) scale(1 1.1)" font-size="12.6" fill="#8c8cb4" text-anchor="middle" >=</text>
<text x="590.15" y="0" transform="translate(0 580.1) scale(1 1.1)" font-size="12.6" fill="#8c8cb4" text-anchor="middle" >=</text>
<text x="669.46" y="0" transform="translate(0 580.1) scale(1 1.1)" font-size="12.6" fill="#8c8cb4" text-anchor="middle" >=</text>
<text x="748.77" y="0" transform="translate(0 580.1) scale(1 1.1)" font-size="12.6" fill="#8c8cb4" text-anchor="middle" >=</text>
<text x="828.08" y="0" transform="translate(0 580.1) scale(1 1.1)" font-size="12.6" fill="#8c8cb4" text-anchor="middle" >=</text>
<text x="907.39" y="0" transform="translate(0 580.1) scale(1 1.1)" font-size="12.6" fill="#8c8cb4" text-anchor="middle" >=</text>
<text x="193.60" y="0" transform="translate(0 594.1) scale(1 1.1)" font-size="12.6" fill="#000a64" text-anchor="middle" >C</text>
<text x="272.91" y="0" transform="translate(0 594.1) scale(1 1.1)" font-size="12.6" fill="#000a64" text-anchor="middle" >C</text>
<text x="352.22" y="0" transform="translate(0 594.1) scale(1 1.1)" font-size="12.6" fill="#8c8cb4" text-anchor="middle" >T</text>
<text x="431.53" y="0" transform="translate(0 594.1) scale(1 1.1)" font-size="12.6" fill="#000a64" text-anchor="middle" >A</text>
<text x="510.84" y="0" transform="translate(0 594.1) scale(1 1.1)" font-size="12.6" fill="#000a64" text-anchor="middle" >C</text>
<text x="590.15" y="0" transform="translate(0 594.1) scale(1 1.1)" font-size="12.6" fill="#000a64" text-anchor="middle" >T</text>
<text x="669.46" y="0" transform="translate(0 594.1) scale(1 1.1)" font-size="12.6" fill="#8c8cb4" text-anchor="middle" >A</text>
<text x="748.77" y="0" transform="translate(0 594.1) scale(1 1.1)" font-size="12.6" fill="#8c8cb4" text-anchor="middle" >T</text>
<text x="828.08" y="0" transform="translate(0 594.1) scale(1 1.1)" font-size="12.6" fill="#000a64" text-anchor="middle" >A</text>
<text x="907.39" y="0" transform="translate(0 594.1) scale(1 1.1)" font-size="12.6" fill="#8c8cb4" text-anchor="middle" >T</text>
<text x="193.60" y="0" transform="translate(0 610.1) scale(1 1.1)" font-size="12.6" fill="#8c8cb4" text-anchor="middle" >=</text>
<text x="272.91" y="0" transform="translate(0 610.1) scale(1 1.1)" font-size="12.6" fill="#8c8cb4" text-anchor="middle" >=</text>
<text x="352.22" y="0" transform="translate(0 610.1) scale(1 1.1)" font-size="12.6" fill="#8c8cb4" text-anchor="middle" >=</text>
<text x="431.53" y="0" transform="translate(0 610.1) scale(1 1.1)" font-size="12.6" fill="#8c8cb4" text-anchor="middle" >=</text>
<text x="510.84" y="0" transform="translate(0 610.1) scale(1 1.1)" font-size="12.6" fill="#8c8cb4" text-anchor="middle" >=</text>
<text x="590.15" y="0" transform="translate(0 610.1) scale(1 1.1)" font-size="12.6" fill="#8c8cb4" text-anchor="middle" >=</text>
<text x="669.46" y="0" transform="translate(0 610.1) scale(1 1.1)" font-size="12.6" fill="#8c8cb4" text-anchor="middle" >=</text>
<text x="748.77" y="0" transform="translate(0 610.1) scale(1 1.1)" font-size="12.6" fill="#8c8cb4" text-anchor="middle" >=</text>
<text x="828.08" y="0" transform="translate(0 610.1) scale(1 1.1)" font-size="12.6" fill="#8c8cb4" text-anchor="middle" >=</text>
<text x="907.39" y="0" transform="translate(0 610.1) scale(1 1.1)" font-size="12.6" fill="#8c8cb4" text-anchor="middle" >=</text>
<text x="440.93" y="0" transform="translate(0 655) scale(1 1.07)" font-size="13" fill="#000" textLength="223.28" lengthAdjust="spacing" >Repeating Elements by RepeatMasker</text>
<text x="152.00" y="0" transform="translate(0 669) scale(1 1.07)" font-size="13" fill="#000" text-anchor="end" >RepeatMasker</text>
<rect x="156" y="657" width="793" height="15" fill="#000"/>
</svg>
</body></html>
